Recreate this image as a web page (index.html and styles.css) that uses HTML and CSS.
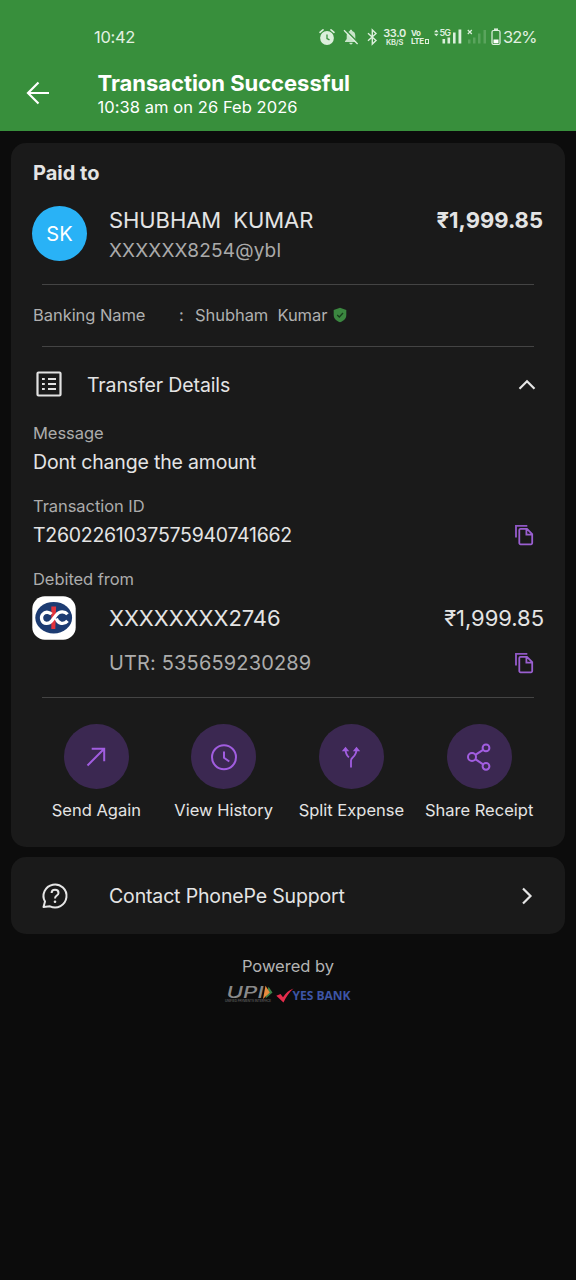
FILE: index.html
```html
<!DOCTYPE html>
<html lang="en">
<head>
<meta charset="utf-8">
<title>Transaction Successful</title>
<link rel="stylesheet" href="styles.css">
</head>
<body>
<header class="header">
  <div class="status">
    <span class="clock">10:42</span>
    <div class="status-icons">
      <svg class="alarm" width="16" height="18" viewBox="0 0 16 18"><circle cx="8" cy="10" r="6.9" fill="#dcefdc"/><path d="M1 4.300 4 1.800M15 4.300 12 1.800" stroke="#dcefdc" stroke-width="1.700" stroke-linecap="round"/><path d="M8 6.500v4l2.500 1.400" fill="none" stroke="#388f3c" stroke-width="1.300"/></svg>
      <svg class="bell" width="16" height="16" viewBox="0 0 16 16"><path d="M8 .8c-.8 0-1.200.5-1.200 1.200C4.800 2.600 3.700 4.200 3.700 6.500V10L2 12.200v.8h12v-.8L12.300 10V6.500c0-2.300-1.100-3.900-3.100-4.500C9.200 1.300 8.800.8 8 .8zM6.300 13.800a1.700 1.700 0 0 0 3.400 0z" fill="#c8e4c9"/><path d="M2.300.8 15.500 14" stroke="#388f3c" stroke-width="1.500"/><path d="M1 1.200 14.600 15" stroke="#dcefdc" stroke-width="1.300"/></svg>
      <svg class="bt" width="11" height="16" viewBox="0 0 11 16"><path d="M1 4.300 9 11.500 5.300 15V1L9 4.500 1 11.700" fill="none" stroke="#dcefdc" stroke-width="1.400"/></svg>
      <div class="speed"><span class="speed-n">33.0</span><span class="speed-u">KB/S</span></div>
      <div class="volte"><span>Vo</span><span>LTE<i class="sim"></i></span></div>
      <svg class="signal" width="29" height="18" viewBox="0 0 29 18"><path d="M0 4.300 2.300 1.800 4.600 4.300zM0 5.800h4.600L2.300 8.300zM8.500 11h2.600v4.500H8.500zM13.500 9.500h2.600v6h-2.600zM19 4.500h2.600v11H19zM24.500 1.500h2.800v14h-2.800z" fill="#dcefdc"/><text class="g5" x="5.500" y="7.600">5G</text></svg>
      <svg class="nosignal" width="20" height="18" viewBox="0 0 20 18"><path d="M.8 2 4.800 6M4.800 2 .8 6" stroke="#dcefdc" stroke-width="1.200"/><path d="M1 11.500h2.500v4H1zM6 9.500h2.500v6H6zM11 5.500h2.500v10H11zM16.500 2H19v13.500h-2.500z" fill="#5aa45d"/></svg>
      <svg class="battery" width="10" height="18" viewBox="0 0 10 18"><path d="M3 1.200h4" stroke="#e2f1e2" stroke-width="1.500"/><rect x="1" y="2.500" width="8" height="14" rx="1.500" fill="none" stroke="#e2f1e2" stroke-width="1.200"/><path d="M2.500 11.500h5v3.800h-5z" fill="#fff"/></svg>
      <span class="percent">32%</span>
    </div>
  </div>
  <div class="titlebar">
    <svg class="back" width="24" height="24" viewBox="0 0 24 24"><path d="M23 12H2M12.500 1.500 2 12l10.500 10.500" fill="none" stroke="#fff" stroke-width="2.200"/></svg>
    <div class="titles">
      <h1 class="title">Transaction Successful</h1>
      <p class="subtitle">10:38 am on 26 Feb 2026</p>
    </div>
  </div>
</header>

<main class="card">
  <h2 class="paid">Paid to</h2>
  <section class="payee">
    <div class="avatar">SK</div>
    <div class="payee-text">
      <p class="name">SHUBHAM&nbsp; KUMAR</p>
      <p class="vpa">XXXXXX8254@ybl</p>
    </div>
    <p class="amount amount-bold">₹1,999.85</p>
  </section>
  <hr class="rule">
  <div class="banking">
    <span class="banking-label">Banking Name</span><span class="colon">:</span><span class="banking-value">Shubham&nbsp; Kumar</span>
    <svg class="shield" width="14" height="16" viewBox="0 0 14 16"><path d="M7 .8 13.300 3v5c0 3.500-2.500 6-6.300 7.200C3.200 14 .7 11.500.7 8V3z" fill="#3b8740"/><path d="M4.200 8 6.300 10 10 6" fill="none" stroke="#173d1b" stroke-width="1.300"/></svg>
  </div>
  <hr class="rule">
  <div class="details-head">
    <svg class="list" width="26" height="26" viewBox="0 0 26 26"><rect x="1.500" y="1.500" width="23" height="23" rx="1" fill="none" stroke="#e2e2e2" stroke-width="2.200"/><path d="M6 8h2.800M6 13h2.800M6 18h2.800M12 8h8M12 13h8M12 18h8" stroke="#e2e2e2" stroke-width="2"/></svg>
    <span class="details-title">Transfer Details</span>
    <svg class="chevron" width="18" height="12" viewBox="0 0 18 12"><path d="M1.500 9.800 9 2.300l7.500 7.500" fill="none" stroke="#e6e6e6" stroke-width="2.200"/></svg>
  </div>
  <section class="field">
    <p class="label">Message</p>
    <p class="value v-msg">Dont change the amount</p>
  </section>
  <section class="field">
    <p class="label">Transaction ID</p>
    <div class="value-row">
      <p class="value v-txn">T2602261037575940741662</p>
      <svg class="copy" width="20" height="22" viewBox="0 0 20 22"><path d="M2 13.500V1.900h11.300" fill="none" stroke="#8f57c4" stroke-width="1.900"/><path d="M6.500 4.900H13l5.200 5.200v9a1.200 1.200 0 0 1-1.200 1.200H6.500a1.200 1.200 0 0 1-1.200-1.200v-13a1.200 1.200 0 0 1 1.200-1.200zM12.400 5v5.700H18" fill="none" stroke="#9a5fd0" stroke-width="1.800"/></svg>
    </div>
  </section>
  <section class="debit">
    <p class="label">Debited from</p>
    <div class="account">
      <svg class="bank" width="44" height="44" viewBox="0 0 44 44"><rect x=".3" y=".3" width="43.400" height="43.400" rx="12.500" fill="#fff"/><ellipse cx="21.700" cy="21.700" rx="18.400" ry="15.800" fill="#1c3b72"/><path d="M19.300 10.500h4.800l-.8 22.500h-4z" fill="#e2343c"/><path d="M35.500 18.200C32.800 15 27.500 14.800 24.500 18.800L20 24.500c-3 4-8.800 3.800-10.200-.8-1.300-4.200 2-8 6-7.400 1.500.2 2.700.9 3.700 1.900M24.300 22.500c1.500 5.500 7.800 6.500 11.200 2.400" fill="none" stroke="#fff" stroke-width="3.300"/></svg>
      <p class="acct-no">XXXXXXXX2746</p>
      <p class="amount amount-reg">₹1,999.85</p>
    </div>
    <div class="utr-row">
      <p class="utr">UTR: 535659230289</p>
      <svg class="copy" width="20" height="22" viewBox="0 0 20 22"><path d="M2 13.500V1.900h11.300" fill="none" stroke="#8f57c4" stroke-width="1.900"/><path d="M6.500 4.900H13l5.200 5.200v9a1.200 1.200 0 0 1-1.200 1.200H6.500a1.200 1.200 0 0 1-1.200-1.200v-13a1.200 1.200 0 0 1 1.200-1.200zM12.400 5v5.700H18" fill="none" stroke="#9a5fd0" stroke-width="1.800"/></svg>
    </div>
  </section>
  <hr class="rule">
  <nav class="actions">
    <div class="action"><span class="disc"><svg width="28" height="28" viewBox="0 0 28 28"><path d="M5.500 22.500 22.200 5.800M9.700 5.800h12.500v12.500" class="ico"/></svg></span><span class="cap">Send Again</span></div>
    <div class="action"><span class="disc"><svg width="28" height="28" viewBox="0 0 28 28"><circle cx="14" cy="14.300" r="12" class="ico"/><path d="M14 8.500v6.300l5.300 3.700" class="ico"/></svg></span><span class="cap">View History</span></div>
    <div class="action"><span class="disc"><svg width="28" height="28" viewBox="0 0 28 28"><path d="M14 24.500v-7c0-1.200.6-2 1.700-3 2.600-2.200 3.800-4 3.800-8.500M8.500 6c0 4 .9 6.300 3.400 8.400" class="ico ico-thin"/><path d="m8.500 3.700 3.700 4.600H4.800zM19.500 3.700l3.700 4.600h-7.400z" fill="#a15de0"/></svg></span><span class="cap">Split Expense</span></div>
    <div class="action"><span class="disc"><svg width="28" height="28" viewBox="0 0 28 28"><circle cx="7" cy="14" r="4" class="ico"/><circle cx="21" cy="4.900" r="3.400" class="ico"/><circle cx="21" cy="23.300" r="3.400" class="ico"/><path d="m10.300 11.900 7.800-5.100M10.300 16.200l7.800 5.200" class="ico"/></svg></span><span class="cap">Share Receipt</span></div>
  </nav>
</main>

<section class="support">
  <svg class="help" width="26" height="26" viewBox="0 0 26 26"><path d="M1.500 24 3 18.600a11.500 11.500 0 1 1 5 4.700z" fill="none" stroke="#e6e6e6" stroke-width="2" stroke-linejoin="round"/><path d="M9.600 10c0-2 1.400-3.300 3.400-3.300s3.500 1.300 3.500 3.200c0 2.700-3.500 2.700-3.500 5.600" fill="none" stroke="#e6e6e6" stroke-width="2"/><circle cx="13" cy="18.700" r="1.300" fill="#e6e6e6"/></svg>
  <span class="support-text">Contact PhonePe Support</span>
  <svg class="arrow" width="12" height="18" viewBox="0 0 12 18"><path d="M2 1.500 9.500 9 2 16.500" fill="none" stroke="#e6e6e6" stroke-width="2.200"/></svg>
</section>

<footer class="footer">
  <p class="powered">Powered by</p>
  <div class="logos">
    <svg class="upi" width="49" height="20" viewBox="0 0 49 20"><text class="upi-main" x="1.500" y="13" textLength="37" lengthAdjust="spacingAndGlyphs">UPI</text><path d="m43.500 1.800 4 5.700-7 6z" fill="#3c8348"/><path d="m40.500.8 4.300 6.700-6.800 6.500z" fill="#e88b3e"/><text class="upi-sub" x="0" y="17" textLength="46">UNIFIED PAYMENTS INTERFACE</text></svg>
    <svg class="tick" width="18" height="16" viewBox="0 0 18 16"><path d="M.3 7.700 4.500 6 7 9.300C10 5 13 2 17.500.5 13 4.500 10 9 7.500 14.500z" fill="#e62c4c"/></svg>
    <span class="yes">YES BANK</span>
  </div>
</footer>
</body>
</html>
```
FILE: styles.css
```css
* { box-sizing: border-box; }
body { margin: 0; min-height: 1280px; background: #0c0c0c; color: #e4e4e4; font-family: Inter, "Noto Sans", sans-serif; }
p, h1, h2 { margin: 0; white-space: pre; }
span { white-space: nowrap; }
svg { display: block; flex: none; overflow: visible; }

.header { height: 131px; background: #388f3c; color: #fff; padding-top: 22px; }
.status { display: flex; align-items: center; justify-content: space-between; height: 30px; padding: 0 41px 0 94px; color: #e2f1e2; }
.clock { font-size: 16.5px; letter-spacing: -0.3px; }
.status-icons { display: flex; align-items: center; }
.bell { margin-left: 8px; }
.bt { margin-left: 8px; }
.speed { display: flex; flex-direction: column; align-items: center; width: 23px; margin-left: 5px; }
.speed-n { font-size: 11px; line-height: 10px; font-weight: 600; letter-spacing: -0.4px; }
.speed-u { font-size: 7.5px; line-height: 9px; font-weight: 600; letter-spacing: -0.2px; }
.volte { display: flex; flex-direction: column; width: 17px; margin-left: 5px; font-size: 8px; line-height: 8px; font-weight: 700; letter-spacing: -0.5px; }
.sim { display: inline-block; width: 4px; height: 5.5px; border: 1px solid #dcefdc; margin-left: 1px; }
.signal { margin-left: 6px; }
.g5 { font-size: 9px; font-weight: 600; fill: #dcefdc; letter-spacing: -0.9px; }
.nosignal { margin-left: 4px; }
.battery { margin-left: 4px; }
.percent { font-size: 16.5px; margin-left: 2px; width: 32px; letter-spacing: -1px; }
.titlebar { display: flex; align-items: center; height: 70px; padding: 15px 0 0 26px; }
.back { margin-top: -3px; }
.titles { margin-left: 47.5px; padding-bottom: 1px; }
.title { font-size: 22px; line-height: 24px; font-weight: 700; letter-spacing: -0.03px; }
.subtitle { padding-top: 1px; margin-bottom: -1px; font-size: 16.5px; line-height: 22px; letter-spacing: 0.06px; }

.card { height: 704px; margin: 12px 11px 0; padding: 15px 22px 0; background: #1a1a1a; border-radius: 15px; }
.paid { height: 47px; font-size: 20px; line-height: 30px; font-weight: 700; }
.payee { display: flex; height: 60px; line-height: 30px; }
.avatar { width: 55px; height: 55px; margin: 1px 0 0 -1px; border-radius: 50%; background: #29b2f6; color: #fff; font-size: 20px; line-height: 56px; text-align: center; }
.payee-text { margin-left: 22px; }
.name { font-size: 22px; letter-spacing: -0.08px; }
.vpa { padding-top: 1px; font-size: 19px; letter-spacing: 0.16px; color: #aaa; }
.amount { margin-left: auto; font-size: 22px; }
.amount-bold { font-weight: 700; }
.amount-reg { margin-right: -1px; letter-spacing: -0.05px; }
.rule { height: 1px; margin: 19px 9px 0; border: 0; background: #444; }
.banking { display: flex; align-items: center; height: 61px; padding-bottom: 1px; font-size: 16.5px; letter-spacing: -0.06px; color: #b0b0b0; }
.banking-label { width: 145px; }
.colon { width: 17px; padding-left: 1px; }
.shield { margin-left: 6px; }
.banking + .rule { margin-top: 0; }
.details-head { display: flex; align-items: center; height: 75px; padding: 0 7px 0 3px; }
.list { margin-top: -1px; }
.details-title { margin: 0 auto 0 25px; font-size: 19.5px; letter-spacing: -0.12px; }
.field { height: 73px; }
.label { font-size: 16.5px; line-height: 22px; letter-spacing: -0.06px; color: #acacac; }
.value { font-size: 19.5px; line-height: 36px; }
.v-msg { letter-spacing: -0.18px; }
.v-txn { letter-spacing: -0.27px; }
.value-row, .utr-row { display: flex; align-items: center; justify-content: space-between; padding-right: 9.5px; }
.account { display: flex; align-items: center; height: 56px; }
.bank { margin-left: -1px; }
.acct-no { margin-left: 33px; font-size: 22px; letter-spacing: -0.08px; }
.utr-row { height: 34px; padding-left: 76px; }
.utr { font-size: 20px; letter-spacing: 0.15px; color: #acacac; }
.debit + .rule { margin-top: 17px; }
.actions { display: grid; grid-template-columns: repeat(4, 1fr); margin: 26px 0 0 -1px; }
.action { display: flex; flex-direction: column; align-items: center; }
.action:first-child { padding-left: 1px; }
.disc { display: grid; place-items: center; width: 65px; height: 65px; border-radius: 50%; background: #3b2851; }
.ico { fill: none; stroke: #a15de0; stroke-width: 2; }
.ico-thin { stroke-width: 1.8; }
.cap { font-size: 16.5px; line-height: 42px; }

.support { display: flex; align-items: center; height: 77px; margin: 10px 11px 0; padding: 0 32px 0 31px; background: #1a1a1a; border-radius: 15px; }
.support-text { margin: 0 auto 0 41px; font-size: 19.5px; letter-spacing: -0.15px; }
.footer { display: flex; flex-direction: column; align-items: center; padding-top: 20px; }
.powered { font-size: 16.5px; line-height: 24px; color: #b4b4b4; }
.logos { display: flex; align-items: center; margin-top: 7px; }
.upi { margin-top: -2px; }
.upi-main { font: italic 500 15.5px Inter, sans-serif; fill: #8a8a8a; }
.upi-sub { font-size: 3px; fill: #777; }
.tick { margin-left: 2px; }
.yes { margin-left: -2px; padding-top: 1px; font: 700 12px/20px "Open Sans", sans-serif; color: #3d55a5; }
```
